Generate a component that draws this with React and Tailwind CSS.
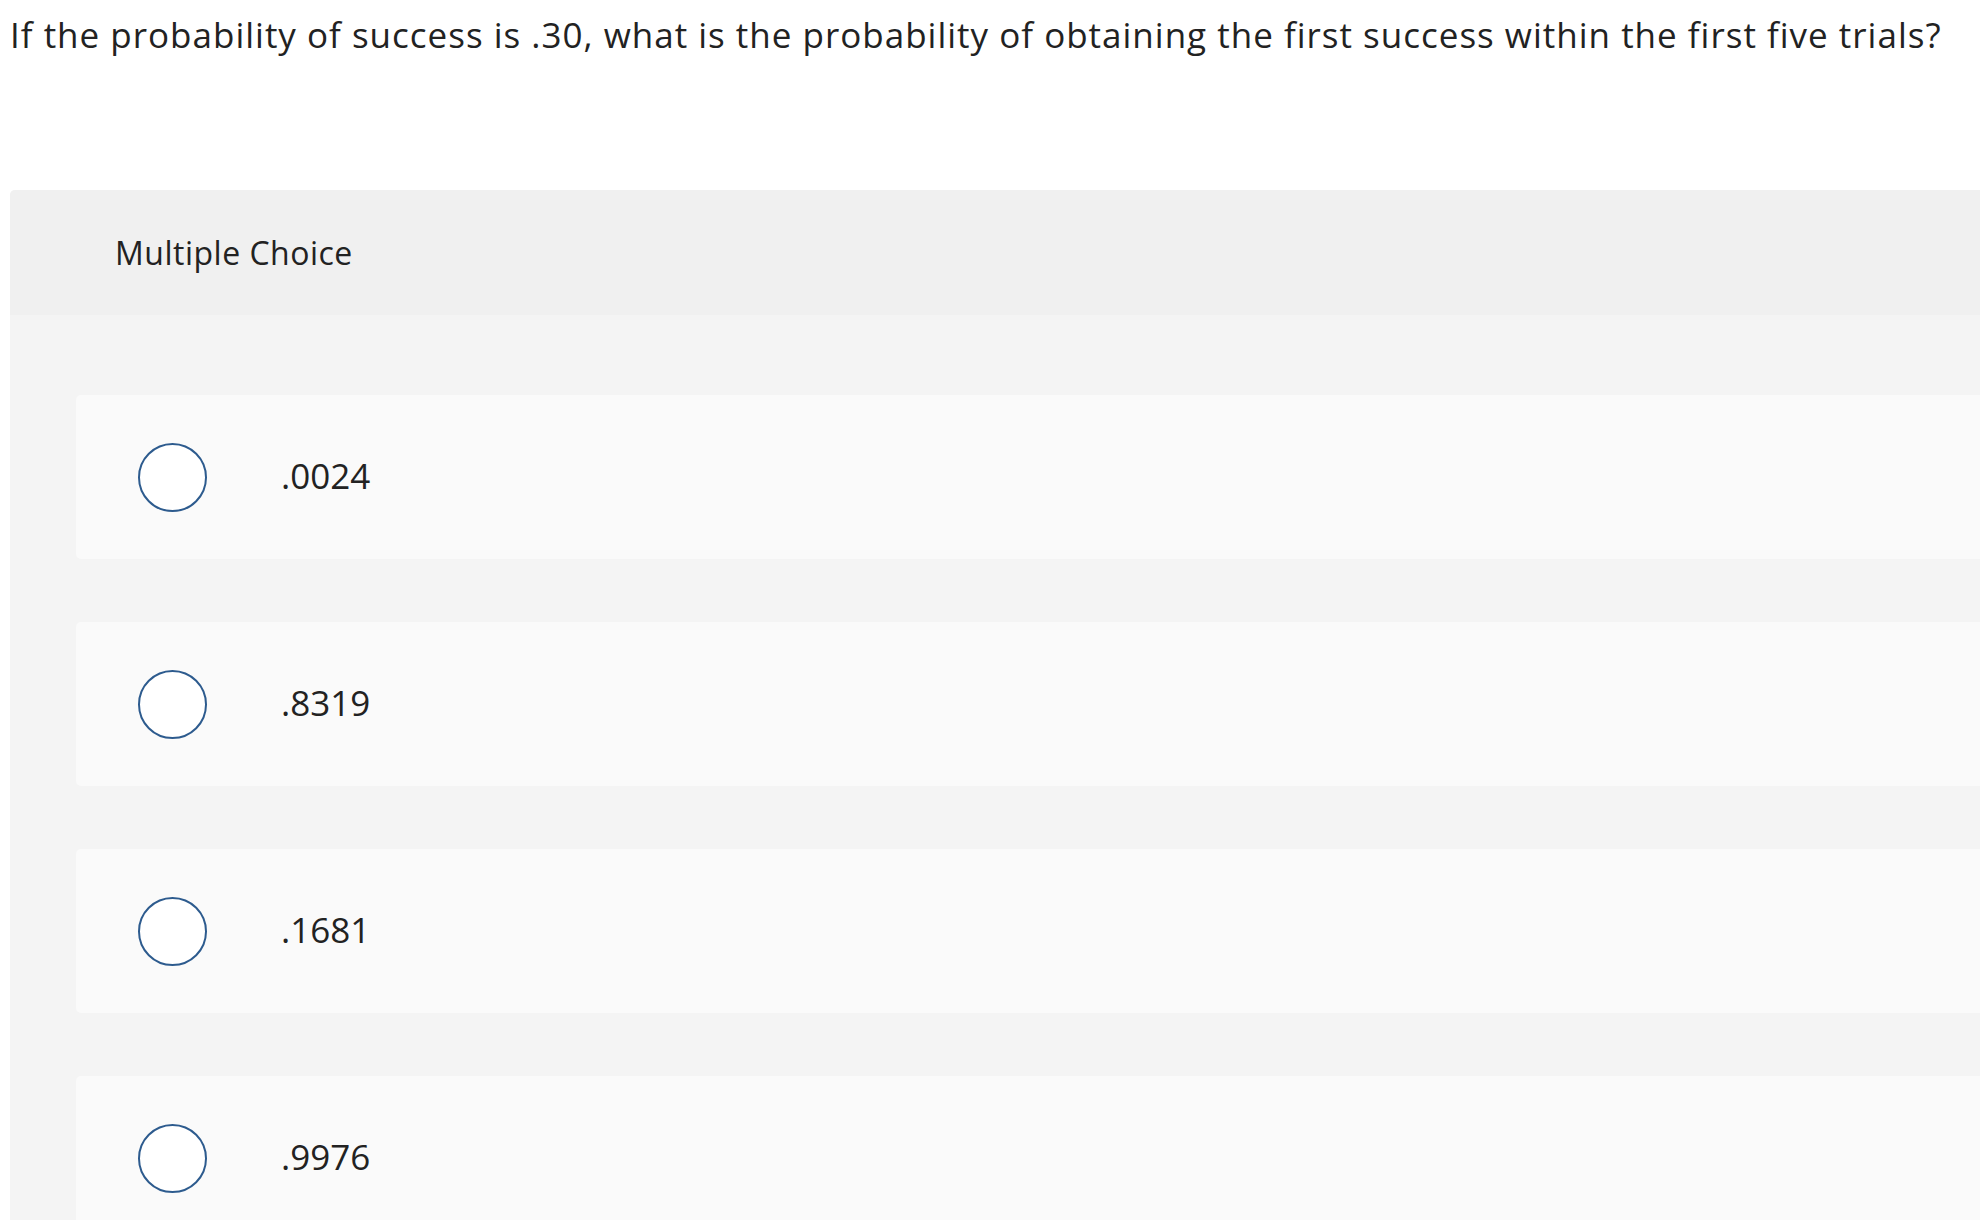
const options = ['.0024', '.8319', '.1681', '.9976']

function Option({ label }) {
  return (
    <div className="flex h-[164px] items-center rounded-[5px] bg-[#fafafa] pl-[62px]">
      <span className="h-[69px] w-[69px] shrink-0 rounded-full border-[2.5px] border-[#2d5b8e] bg-white" />
      <span className="ml-[74px] mb-[2px] text-[35px] leading-[40px] text-[#222]">{label}</span>
    </div>
  )
}

export default function App() {
  return (
    <div className="h-[1220px] w-[1980px] overflow-hidden bg-white font-['Open_Sans','Liberation_Sans',sans-serif]">
      {/* Question */}
      <p className="pl-[10px] pt-[15px] text-[35px] leading-[40px] tracking-[1px] whitespace-nowrap text-[#222]">
        If the probability of success is .30, what is the probability of obtaining the first success within the first five trials?
      </p>

      {/* Answer panel */}
      <div className="ml-[10px] mt-[135px] w-[2100px] overflow-hidden rounded-tl-[5px] bg-[#f4f4f4]">
        <div className="h-[125px] bg-[#f0f0f0] pl-[105px] pt-[44px]">
          <span className="text-[32px] leading-[38px] tracking-[0.5px] text-[#222]">Multiple Choice</span>
        </div>
        <div className="flex flex-col gap-[63px] pl-[66px] pt-[80px] pb-[80px]">
          {options.map((o) => (
            <Option key={o} label={o} />
          ))}
        </div>
      </div>
    </div>
  )
}
